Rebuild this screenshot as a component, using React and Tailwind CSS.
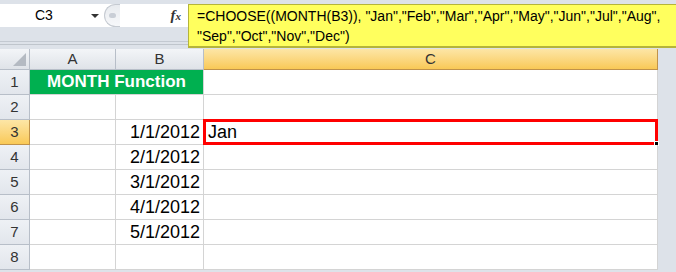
import React from 'react';

const rows = [
  { n: 1, b: '', title: true },
  { n: 2, b: '' },
  { n: 3, b: '1/1/2012', c: 'Jan', active: true },
  { n: 4, b: '2/1/2012' },
  { n: 5, b: '3/1/2012' },
  { n: 6, b: '4/1/2012' },
  { n: 7, b: '5/1/2012' },
  { n: 8, b: '' },
];

const FormulaBar = () => (
  <div className="flex h-[49px]">
    <div className="w-[188px] flex flex-col">
      <div className="mt-[4px] h-[23px] bg-white flex items-center">
        <div className="w-[104px] flex items-center">
          <span className="ml-[35px] text-[14px] text-black">C3</span>
          <span className="ml-auto mr-[5px] w-0 h-0 border-l-[4px] border-r-[4px] border-t-[4px] border-l-transparent border-r-transparent border-t-[#333]"></span>
        </div>
        <div className="w-[16px] h-[23px] rounded-l-full border-l border-y border-[#c5cad1] bg-gradient-to-b from-[#e8ebef] to-[#f7f8fa] flex items-center pl-[4px]">
          <span className="w-[7px] h-[5px] rounded-full bg-[#c9ced6]"></span>
        </div>
        <span className="ml-auto mr-[7px] text-[15px] italic font-bold text-[#333]" style={{ fontFamily: '"Liberation Serif", serif' }}>
          f<span className="text-[11px]">x</span>
        </span>
      </div>
      <div className="h-[15px] border-b border-[#c3c9d1]"></div>
      <div className="h-[3px] border-b border-[#bfc5cc]"></div>
    </div>
    <div className="flex-1 mt-[4px] h-[44px] bg-[#ffff5e] border-l border-t border-b-2 border-[#b5b43a] pl-[8px] pt-[1px] text-[14px] leading-[20px] text-black">
      <div>=CHOOSE((MONTH(B3)), "Jan","Feb","Mar","Apr","May","Jun","Jul","Aug",</div>
      <div>"Sep","Oct","Nov","Dec")</div>
    </div>
  </div>
);

const App = () => {
  const head = 'h-[21px] border-r border-b border-[#b7bec8] bg-gradient-to-b from-[#f3f5f8] to-[#dfe3e8] flex items-center justify-center text-[15px] text-[#333]';
  const cell = 'h-[25px] border-r border-b border-[#d4d4d4] bg-white';

  return (
    <div className="w-[676px] h-[272px] overflow-hidden bg-[#dde2e9]" style={{ fontFamily: '"Liberation Sans", Arial, sans-serif' }}>
      <FormulaBar />
      <div className="grid grid-cols-[30px_86px_88px_454px_18px]">
        <div className={`${head} justify-end items-end pr-[3px] pb-[3px]`}>
          <svg width="13" height="13" viewBox="0 0 13 13">
            <path d="M13 0 L13 13 L0 13 Z" fill="#b4bac2" />
          </svg>
        </div>
        <div className={head}>A</div>
        <div className={head}>B</div>
        <div className="h-[21px] border-r border-b border-[#c0924a] bg-gradient-to-b from-[#fde6a6] to-[#f9c955] flex items-center justify-center text-[15px] text-[#333]">C</div>
        <div className="h-[21px] bg-[#dde2e9]"></div>

        {rows.map((r) => (
          <React.Fragment key={r.n}>
            {r.active ? (
              <div className="h-[25px] border-r border-b border-[#c0924a] bg-gradient-to-b from-[#fde6a6] to-[#f9c955] flex items-center justify-center text-[15px] text-[#333]">{r.n}</div>
            ) : (
              <div className="h-[25px] border-r border-b border-[#b7bec8] bg-gradient-to-b from-[#eef1f5] to-[#e2e6ec] flex items-center justify-center text-[15px] text-[#333]">{r.n}</div>
            )}
            {r.title ? (
              <div className="col-span-2 h-[25px] border-b border-r border-[#d4d4d4] bg-[#00b050] flex items-center justify-center text-[17px] font-bold text-white">
                MONTH Function
              </div>
            ) : (
              <>
                <div className={cell}></div>
                <div className={`${cell} flex items-center justify-end pr-[3px] text-[18px] text-black`}>{r.b}</div>
              </>
            )}
            <div className={`${cell} relative flex items-center pl-[4px] text-[18px] text-black`}>
              {r.c}
              {r.active && (
                <div className="absolute -left-[1px] -top-[1px] -right-[1px] -bottom-[1px] border-[3px] border-[#ff0000]">
                  <span className="absolute -right-[4px] -bottom-[4px] w-[5px] h-[5px] bg-black border border-white"></span>
                </div>
              )}
            </div>
            <div className="h-[25px] bg-[#dde2e9] border-l border-[#d4d4d4] -ml-px"></div>
          </React.Fragment>
        ))}
      </div>
    </div>
  );
};

export default App;
